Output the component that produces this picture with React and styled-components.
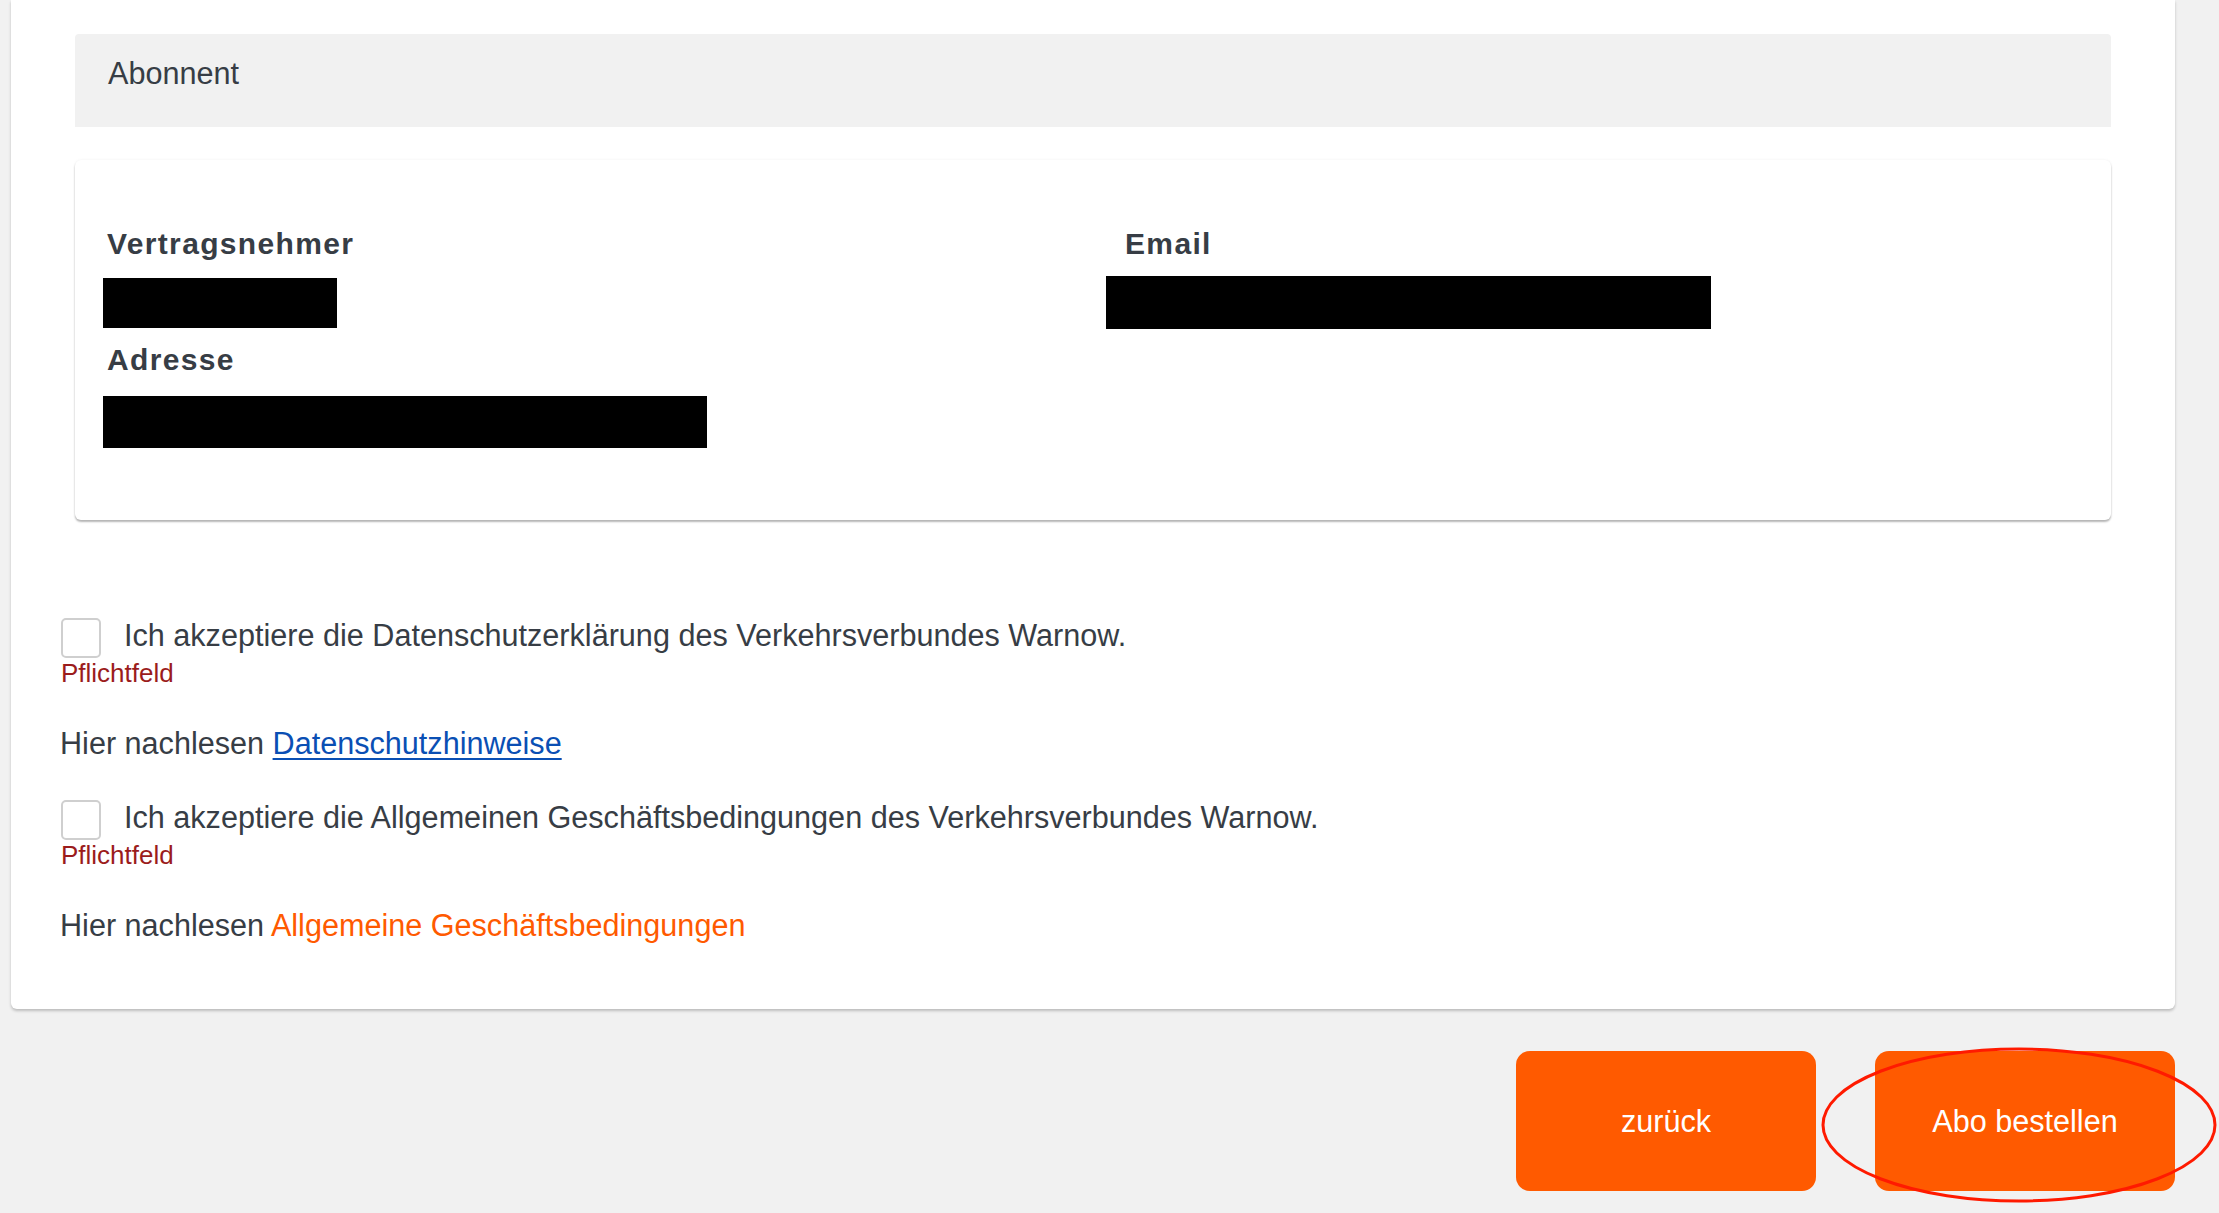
import styled, { createGlobalStyle } from "styled-components"

const Global = createGlobalStyle`
html, body {
    margin: 0;
    padding: 0;
    background: #f1f1f1;
    font-family: "Liberation Sans", Arial, sans-serif;
    color: #373d45;
}
`

const Page = styled.main`
position: relative;
height: 1213px;
padding: 0 44px 0 11px;
box-sizing: border-box;
overflow: hidden;
`

const Panel = styled.section`
background: #ffffff;
border-radius: 0 0 6px 6px;
box-shadow: 0 2px 3px rgba(0, 0, 0, 0.22);
padding: 34px 50px 67px;
`

const SectionHead = styled.div`
margin: 0 14px;
height: 93px;
box-sizing: border-box;
padding: 22px 33px 0;
background: #f1f1f1;
border-radius: 4px 4px 0 0;
font-size: 30.6px;
line-height: 34px;
color: #373d45;
`

const Card = styled.div`
margin: 33px 14px 0;
height: 360px;
box-sizing: border-box;
padding: 67px 30px 0 32px;
background: #ffffff;
border-radius: 6px;
box-shadow: 0 0 3px rgba(0, 0, 0, 0.06), 0 2px 2px rgba(0, 0, 0, 0.28);
display: grid;
grid-template-columns: 1fr 1fr;
column-gap: 62px;
align-items: start;
`

const Field = styled.div`
display: flex;
flex-direction: column;
align-items: flex-start;
`

const Label = styled.div`
font-size: 30px;
line-height: 34px;
font-weight: bold;
letter-spacing: 1.35px;
color: #373d45;
margin-top: ${p => p.$top || 0}px;
`

const Redacted = styled.div`
background: #000000;
width: ${p => p.$w}px;
height: ${p => p.$h}px;
margin-top: ${p => p.$top}px;
margin-left: ${p => p.$shift}px;
`

const Legal = styled.div`
margin-top: 98px;
display: flex;
flex-direction: column;
`

const CheckRow = styled.label`
display: flex;
align-items: flex-start;
gap: 23px;
font-size: 30.6px;
line-height: 34px;
color: #373d45;
margin-top: ${p => p.$top || 0}px;
`

const Box = styled.span`
width: 40px;
height: 40px;
box-sizing: border-box;
border: 2px solid #cfcfcf;
border-radius: 5px;
background: #ffffff;
flex-shrink: 0;
`

const Required = styled.div`
font-size: 26px;
line-height: 30px;
color: #9b1c1c;
`

const ReadMore = styled.p`
margin: 38px 0 0 -1px;
font-size: 30.6px;
line-height: 34px;
color: #373d45;
`

const Link = styled.a`
color: ${p => (p.$orange ? "#ff5a00" : "#0a4fb4")};
text-decoration: ${p => (p.$orange ? "none" : "underline")};
text-decoration-thickness: 2px;
text-underline-offset: 4px;
`

const Actions = styled.div`
display: flex;
justify-content: flex-end;
gap: 59px;
margin-top: 42px;
`

const Button = styled.button`
width: 300px;
height: 140px;
border: none;
border-radius: 14px;
background: #ff5a00;
color: #ffffff;
font-family: "Liberation Sans", Arial, sans-serif;
font-size: 30.6px;
cursor: pointer;
`

const Marker = styled.svg`
position: absolute;
left: 1820px;
top: 1046px;
width: 400px;
height: 158px;
pointer-events: none;
overflow: visible;
`

function App() {
    return (
        <Page>
            <Global />
            <Panel>
                <SectionHead>Abonnent</SectionHead>
                <Card>
                    <Field>
                        <Label>Vertragsnehmer</Label>
                        <Redacted $w={234} $h={50} $top={17} $shift={-4} />
                        <Label $top={15}>Adresse</Label>
                        <Redacted $w={604} $h={52} $top={19} $shift={-4} />
                    </Field>
                    <Field>
                        <Label>Email</Label>
                        <Redacted $w={605} $h={53} $top={15} $shift={-19} />
                    </Field>
                </Card>
                <Legal>
                    <CheckRow>
                        <Box />
                        Ich akzeptiere die Datenschutzerklärung des Verkehrsverbundes Warnow.
                    </CheckRow>
                    <Required>Pflichtfeld</Required>
                    <ReadMore>
                        Hier nachlesen <Link href="#">Datenschutzhinweise</Link>
                    </ReadMore>
                    <CheckRow $top={40}>
                        <Box />
                        Ich akzeptiere die Allgemeinen Geschäftsbedingungen des Verkehrsverbundes Warnow.
                    </CheckRow>
                    <Required>Pflichtfeld</Required>
                    <ReadMore>
                        Hier nachlesen <Link href="#" $orange>Allgemeine Geschäftsbedingungen</Link>
                    </ReadMore>
                </Legal>
            </Panel>
            <Actions>
                <Button>zurück</Button>
                <Button>Abo bestellen</Button>
            </Actions>
            <Marker viewBox="0 0 400 158">
                <ellipse cx="199" cy="79" rx="196" ry="76" fill="none" stroke="#ff1a00" strokeWidth="3" />
            </Marker>
        </Page>
    )
}

export default App
